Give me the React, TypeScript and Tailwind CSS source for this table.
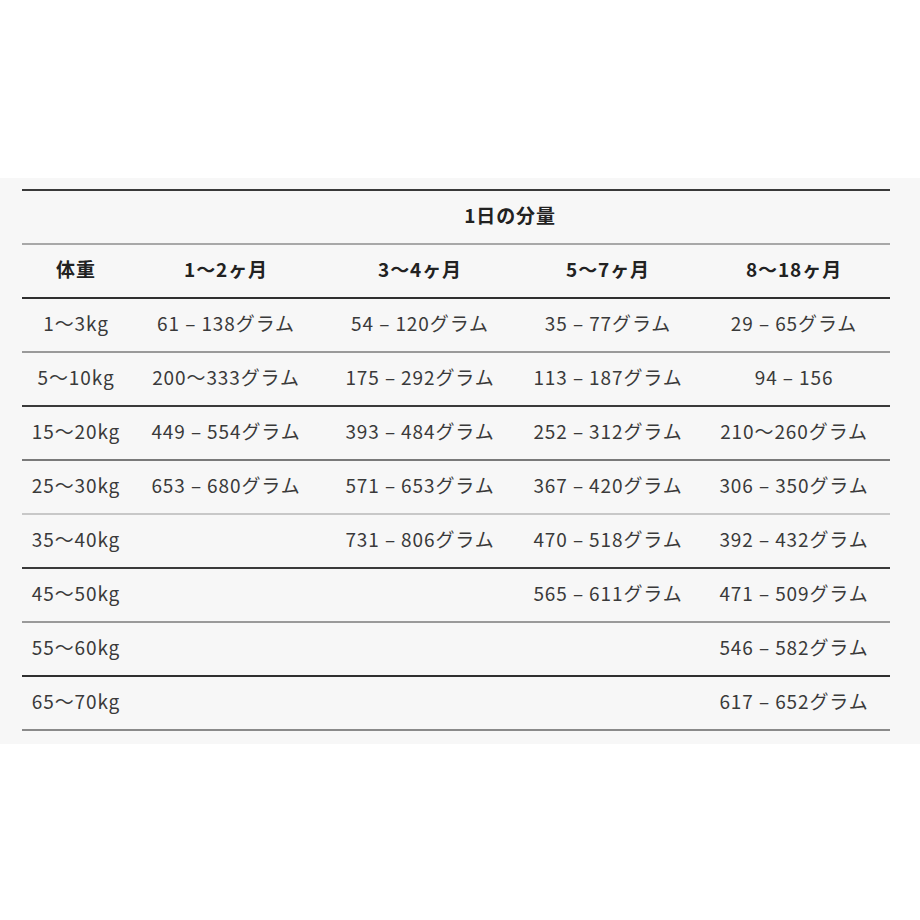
const ages = ['1〜2ヶ月', '3〜4ヶ月', '5〜7ヶ月', '8〜18ヶ月']

const rows: { weight: string; cells: string[]; border: string }[] = [
  { weight: '1〜3kg', cells: ['61 – 138グラム', '54 – 120グラム', '35 – 77グラム', '29 – 65グラム'], border: 'border-[#9a9a9a]' },
  { weight: '5〜10kg', cells: ['200〜333グラム', '175 – 292グラム', '113 – 187グラム', '94 – 156'], border: 'border-[#3a3a3a]' },
  { weight: '15〜20kg', cells: ['449 – 554グラム', '393 – 484グラム', '252 – 312グラム', '210〜260グラム'], border: 'border-[#7a7a7a]' },
  { weight: '25〜30kg', cells: ['653 – 680グラム', '571 – 653グラム', '367 – 420グラム', '306 – 350グラム'], border: 'border-[#c8c8c8]' },
  { weight: '35〜40kg', cells: ['', '731 – 806グラム', '470 – 518グラム', '392 – 432グラム'], border: 'border-[#3a3a3a]' },
  { weight: '45〜50kg', cells: ['', '', '565 – 611グラム', '471 – 509グラム'], border: 'border-[#9a9a9a]' },
  { weight: '55〜60kg', cells: ['', '', '', '546 – 582グラム'], border: 'border-[#2f2f2f]' },
  { weight: '65〜70kg', cells: ['', '', '', '617 – 652グラム'], border: 'border-[#8a8a8a]' },
]

export default function App() {
  return (
    <div className="min-h-[920px] bg-white pt-[178px] font-['Noto_Sans_CJK_JP',sans-serif]">
      <div className="bg-[#f7f7f7] pl-[22px] pr-[30px] pt-[11px] pb-[13px]">
        <table className="w-[868px] table-fixed border-collapse text-[19px] tracking-[0.9px] text-[#3a3a3a]">
          <colgroup>
            <col className="w-[108px]" />
            <col className="w-[192px]" />
            <col className="w-[196px]" />
            <col className="w-[180px]" />
            <col className="w-[192px]" />
          </colgroup>
          <thead>
            <tr className="h-[54px] border-t-2 border-b-2 border-t-[#3a3a3a] border-b-[#a8a8a8]">
              <th />
              <th colSpan={4} className="pb-[3px] text-center font-bold text-[#222]">1日の分量</th>
            </tr>
            <tr className="h-[54px] border-b-2 border-[#2f2f2f]">
              <th className="pb-[3px] text-center font-bold text-[#222]">体重</th>
              {ages.map((a) => (
                <th key={a} className="pb-[3px] text-center font-bold text-[#222]">{a}</th>
              ))}
            </tr>
          </thead>
          <tbody>
            {rows.map((r) => (
              <tr key={r.weight} className={`h-[54px] border-b-2 ${r.border}`}>
                <td className="pb-[3px] text-center whitespace-nowrap">{r.weight}</td>
                {r.cells.map((c, i) => (
                  <td key={i} className="pb-[3px] text-center whitespace-nowrap">{c}</td>
                ))}
              </tr>
            ))}
          </tbody>
        </table>
      </div>
    </div>
  )
}
